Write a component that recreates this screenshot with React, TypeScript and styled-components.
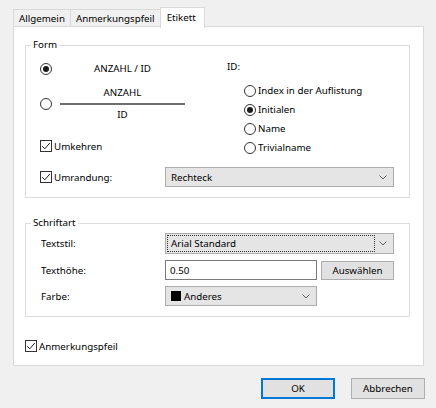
import React from "react";
import styled, { createGlobalStyle } from "styled-components";

const Global = createGlobalStyle`
  html, body { margin: 0; padding: 0; background: #f0f0f0; }
  body {
    font-family: "Noto Sans", "Liberation Sans", sans-serif;
    font-size: 9.75px;
    color: #000;
  }
  * { box-sizing: border-box; }
`;

const Dialog = styled.div`
  width: 436px;
  height: 408px;
  padding: 7px 0 0 13px;
  display: flex;
  flex-direction: column;
`;

const TabStrip = styled.div`
  display: flex;
  align-items: flex-end;
  height: 20px;
  position: relative;
  z-index: 1;
`;

const Tab = styled.div<{ $active?: boolean }>`
  height: ${(p) => (p.$active ? "21px" : "18px")};
  margin-left: -1px;
  margin-bottom: ${(p) => (p.$active ? "-1px" : "0")};
  padding: ${(p) => (p.$active ? "0 8px 2px 6px" : "0 5px")};
  border: 1px solid #d9d9d9;
  border-bottom: ${(p) => (p.$active ? "none" : "1px solid #d9d9d9")};
  background: ${(p) => (p.$active ? "#fff" : "#f0f0f0")};
  display: flex;
  align-items: center;
  white-space: nowrap;
  &:first-child { margin-left: 0; }
`;

const Panel = styled.div`
  width: 411px;
  height: 340px;
  margin-top: -1px;
  background: #fff;
  border: 1px solid #d9d9d9;
  padding: 10px 13px 0 11px;
  display: flex;
  flex-direction: column;
`;

const Group = styled.fieldset<{ $mt?: number }>`
  margin: ${(p) => p.$mt ?? 0}px 0 0 0;
  padding: 0;
  min-width: 0;
  width: 385px;
  border: 1px solid #dcdcdc;
`;

const Legend = styled.legend`
  margin-left: 5px;
  padding: 0 2px;
  line-height: 16px;
`;

const FormBody = styled.div`
  padding: 0 14px 10px 14px;
  display: flex;
  flex-direction: column;
`;

const TopArea = styled.div`
  display: flex;
`;

const LeftCol = styled.div`
  width: 187px;
  display: flex;
  flex-direction: column;
`;

const RightCol = styled.div`
  display: flex;
  flex-direction: column;
`;

const ChoiceRow = styled.div<{ $h: number }>`
  height: ${(p) => p.$h}px;
  display: flex;
  align-items: center;
  gap: 8px;
`;

const CenterLabel = styled.div`
  width: 125px;
  text-align: center;
  line-height: 16px;
`;

const Fraction = styled.div`
  width: 125px;
  display: flex;
  flex-direction: column;
  align-items: center;
  line-height: 16px;
`;

const FractionLine = styled.div`
  width: 100%;
  height: 2px;
  margin: 2px 0 2px;
  background: #6e6e6e;
`;

const CheckRow = styled.label<{ $mt?: number; $w?: number }>`
  margin-top: ${(p) => p.$mt ?? 0}px;
  ${(p) => (p.$w ? `width: ${p.$w}px; flex: none;` : "")}
  height: 16px;
  display: flex;
  align-items: center;
  gap: 2px;
  white-space: nowrap;
`;

const IdLabel = styled.div`
  margin-top: 6px;
  line-height: 16px;
`;

const RadioList = styled.div`
  margin-top: 6px;
  padding-left: 17px;
  display: flex;
  flex-direction: column;
`;

const RadioRow = styled.label`
  height: 19px;
  display: flex;
  align-items: center;
  gap: 2px;
  white-space: nowrap;
`;

const FieldRow = styled.div<{ $mt?: number; $h: number }>`
  margin-top: ${(p) => p.$mt ?? 0}px;
  height: ${(p) => p.$h}px;
  display: flex;
  align-items: center;
`;

const Combo = styled.div<{ $w: number; $h?: number }>`
  width: ${(p) => p.$w}px;
  height: ${(p) => p.$h ?? 20}px;
  border: 1px solid #adadad;
  background: #e5e5e5;
  display: flex;
  align-items: center;
  padding: 0 6px 0 1px;
  gap: 4px;
`;

const ComboText = styled.div<{ $focus?: boolean }>`
  flex: 1;
  height: calc(100% - 2px);
  display: flex;
  align-items: center;
  gap: 3px;
  padding-left: 3px;
  border: 1px ${(p) => (p.$focus ? "dotted #333" : "solid transparent")};
  white-space: nowrap;
`;

const Swatch = styled.span`
  width: 10px;
  height: 10px;
  background: #000;
  flex: none;
`;

const FieldLabel = styled.div`
  width: 124px;
  flex: none;
`;

const SchriftBody = styled.div`
  padding: 2px 14px 10px 15px;
  display: flex;
  flex-direction: column;
`;

const TextInput = styled.div`
  width: 152px;
  height: 20px;
  border: 1px solid #7a7a7a;
  background: #fff;
  display: flex;
  align-items: center;
  padding-left: 4px;
`;

const SmallButton = styled.div`
  margin-left: 4px;
  width: 73px;
  height: 19px;
  border: 1px solid #adadad;
  background: #e1e1e1;
  display: flex;
  align-items: center;
  justify-content: center;
`;

const BottomCheck = styled(CheckRow)`
  margin-top: 21px;
`;

const ButtonBar = styled.div`
  margin-top: 12px;
  padding-right: 11px;
  display: flex;
  justify-content: flex-end;
  gap: 16px;
`;

const DialogButton = styled.div<{ $default?: boolean }>`
  width: 74px;
  height: 21px;
  border: ${(p) => (p.$default ? "2px solid #0078d7" : "1px solid #adadad")};
  background: #e1e1e1;
  display: flex;
  align-items: center;
  justify-content: center;
`;

const Radio = ({ checked }: { checked?: boolean }) => (
  <svg width="12" height="12" viewBox="0 0 12 12" style={{ flex: "none" }}>
    <circle cx="6" cy="6" r="5.5" fill="#fff" stroke="#333" strokeWidth="1" />
    {checked && <circle cx="6" cy="6" r="3" fill="#1a1a1a" />}
  </svg>
);

const Check = ({ checked }: { checked?: boolean }) => (
  <svg width="12" height="12" viewBox="0 0 12 12" style={{ flex: "none" }}>
    <rect x="0.5" y="0.5" width="11" height="11" fill="#fff" stroke="#333" />
    {checked && (
      <polyline points="2.2,6.2 4.8,8.8 9.8,3" fill="none" stroke="#1a1a1a" strokeWidth="1" />
    )}
  </svg>
);

const Chevron = () => (
  <svg width="8" height="5" viewBox="0 0 8 5" style={{ flex: "none" }}>
    <polyline points="0.5,0.5 4,4 7.5,0.5" fill="none" stroke="#606060" strokeWidth="1" />
  </svg>
);

export default function App() {
  return (
    <>
      <Global />
      <Dialog>
        <TabStrip>
          <Tab>Allgemein</Tab>
          <Tab>Anmerkungspfeil</Tab>
          <Tab $active>Etikett</Tab>
        </TabStrip>
        <Panel>
          <Group>
            <Legend>Form</Legend>
            <FormBody>
              <TopArea>
                <LeftCol>
                  <ChoiceRow $h={32}>
                    <Radio checked />
                    <CenterLabel>ANZAHL / ID</CenterLabel>
                  </ChoiceRow>
                  <ChoiceRow $h={38}>
                    <Radio />
                    <Fraction>
                      <span>ANZAHL</span>
                      <FractionLine />
                      <span>ID</span>
                    </Fraction>
                  </ChoiceRow>
                  <CheckRow $mt={15}>
                    <Check checked />
                    Umkehren
                  </CheckRow>
                </LeftCol>
                <RightCol>
                  <IdLabel>ID:</IdLabel>
                  <RadioList>
                    <RadioRow>
                      <Radio />
                      Index in der Auflistung
                    </RadioRow>
                    <RadioRow>
                      <Radio checked />
                      Initialen
                    </RadioRow>
                    <RadioRow>
                      <Radio />
                      Name
                    </RadioRow>
                    <RadioRow>
                      <Radio />
                      Trivialname
                    </RadioRow>
                  </RadioList>
                </RightCol>
              </TopArea>
              <FieldRow $mt={10} $h={20}>
                <CheckRow $w={125}>
                  <Check checked />
                  Umrandung:
                </CheckRow>
                <Combo $w={229}>
                  <ComboText>Rechteck</ComboText>
                  <Chevron />
                </Combo>
              </FieldRow>
            </FormBody>
          </Group>

          <Group $mt={17}>
            <Legend>Schriftart</Legend>
            <SchriftBody>
              <FieldRow $h={21}>
                <FieldLabel>Textstil:</FieldLabel>
                <Combo $w={229} $h={21}>
                  <ComboText $focus>Arial Standard</ComboText>
                  <Chevron />
                </Combo>
              </FieldRow>
              <FieldRow $mt={6} $h={20}>
                <FieldLabel>Texthöhe:</FieldLabel>
                <TextInput>0.50</TextInput>
                <SmallButton>Auswählen</SmallButton>
              </FieldRow>
              <FieldRow $mt={6} $h={20}>
                <FieldLabel>Farbe:</FieldLabel>
                <Combo $w={152}>
                  <ComboText>
                    <Swatch />
                    Anderes
                  </ComboText>
                  <Chevron />
                </Combo>
              </FieldRow>
            </SchriftBody>
          </Group>

          <BottomCheck>
            <Check checked />
            Anmerkungspfeil
          </BottomCheck>
        </Panel>
        <ButtonBar>
          <DialogButton $default>OK</DialogButton>
          <DialogButton>Abbrechen</DialogButton>
        </ButtonBar>
      </Dialog>
    </>
  );
}
